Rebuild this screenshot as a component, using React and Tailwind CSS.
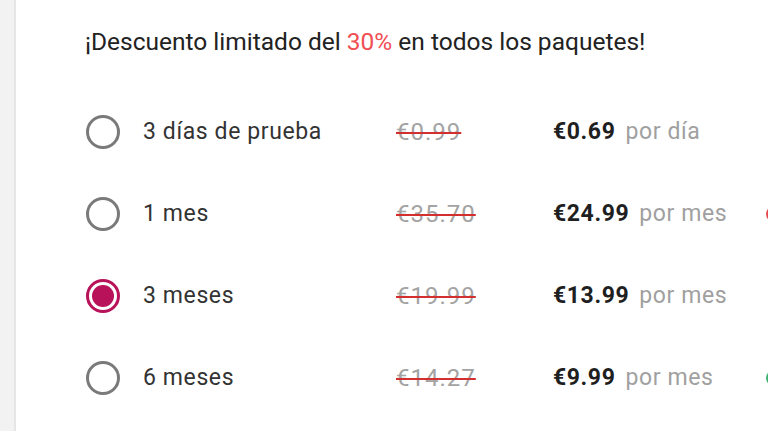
const plans = [
  { id: 'trial', label: '3 días de prueba', old: '€0.99', price: '€0.69', unit: 'por día' },
  { id: '1m', label: '1 mes', old: '€35.70', price: '€24.99', unit: 'por mes', badge: 'bg-[#e5484d]' },
  { id: '3m', label: '3 meses', old: '€19.99', price: '€13.99', unit: 'por mes', selected: true },
  { id: '6m', label: '6 meses', old: '€14.27', price: '€9.99', unit: 'por mes', badge: 'bg-[#3cb371]' },
];

function Radio({ selected }) {
  if (selected) {
    return (
      <span className="w-[34px] h-[34px] rounded-full border-[3px] border-[#b8135a] flex items-center justify-center shrink-0">
        <span className="w-[22px] h-[22px] rounded-full bg-[#b8135a]" />
      </span>
    );
  }
  return <span className="w-[34px] h-[34px] rounded-full border-[3px] border-[#7a7a7a] shrink-0" />;
}

export default function App() {
  return (
    <div className="w-[768px] h-[431px] flex bg-white overflow-hidden font-['Roboto',sans-serif]">
      <div className="w-[16px] bg-[#f2f2f2] border-r-2 border-[#e6e6e6] shrink-0" />
      <div className="flex-1 relative">
        <h1 className="ml-[69px] mt-[27px] text-[24.5px] leading-[30px] text-[#222]">
          ¡Descuento limitado del <span className="text-[#f04e54]">30%</span> en todos los paquetes!
        </h1>
        <ul className="mt-[58px] ml-[70px] flex flex-col gap-[48px]">
          {plans.map((p) => (
            <li key={p.id} className="flex items-center h-[34px] text-[23px] tracking-[0.6px] relative">
              <Radio selected={p.selected} />
              <span className="ml-[23px] w-[253px] text-[#333]">{p.label}</span>
              <span className="w-[157px] text-[24px] tracking-[1px] text-[#a3a3a3] line-through decoration-[#d32f2f] decoration-2">{p.old}</span>
              <span className="font-bold text-[#1f1f1f]">{p.price}</span>
              <span className="ml-[10px] text-[#a0a0a0]">{p.unit}</span>
              {p.badge && (
                <span className={`absolute left-[680px] top-[9px] w-[10px] h-[16px] rounded-l-full ${p.badge}`} />
              )}
            </li>
          ))}
        </ul>
      </div>
    </div>
  );
}
